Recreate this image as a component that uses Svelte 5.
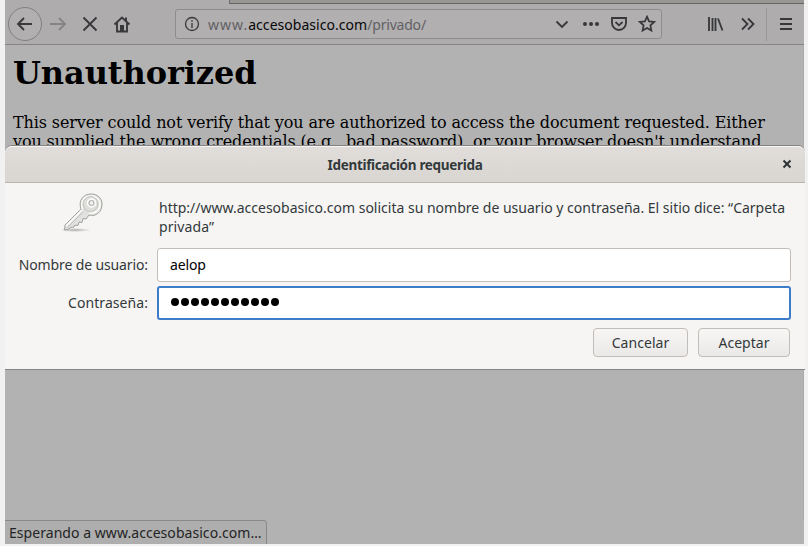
<script>
  let user = $state('aelop');
  const password = '●'.repeat(11);
</script>

<div class="screen">
  <div class="window">
    <div class="tabs"><span></span></div>
    <nav class="toolbar">
      <button class="back" aria-label="Atrás"><svg width="18" height="16" viewBox="0 0 18 16"><path d="M16 8H2M8 2L2 8l6 6" /></svg></button>
      <svg class="forward" width="18" height="16" viewBox="0 0 18 16"><path d="M1 8h15M10 2l6 6-6 6" /></svg>
      <svg class="stop" width="16" height="16" viewBox="0 0 16 16"><path d="M1.500 1.500l13 13M14.500 1.500l-13 13" /></svg>
      <svg class="home" width="18" height="17" viewBox="0 0 18 17"><path d="M1.500 8.500L9 1.500l7.500 7M4 7v8.500h10V7" /><path class="solid" d="M7 9h4v6H7zM12 1.500h2v4l-2-2z" /></svg>
      <div class="address">
        <svg class="info" width="16" height="16" viewBox="0 0 16 16"><circle cx="8" cy="8" r="6.500" /><path d="M8 7v5M8 4v1.700" /></svg>
        <span class="url"><span class="sub">www.</span><b>accesobasico.com</b><span class="path">/privado/</span></span>
        <svg class="chevron" width="14" height="10" viewBox="0 0 14 10"><path d="M1.500 2.500L7 8l5.500-5.500" /></svg>
        <svg class="dots" width="18" height="6" viewBox="0 0 18 6"><g class="solid"><circle cx="3" cy="3" r="2" /><circle cx="9" cy="3" r="2" /><circle cx="15" cy="3" r="2" /></g></svg>
        <svg class="pocket" width="18" height="16" viewBox="0 0 18 16"><path d="M2 2h14v5a7 7 0 0 1-14 0zM5.500 6L9 9.300 12.500 6" /></svg>
        <svg class="star" width="18" height="18" viewBox="0 0 18 18"><path d="M9 1.700l2.100 4.700 5 .6-3.700 3.400 1 5.200L9 13l-4.400 2.600 1-5.200L1.900 7l5-.6z" /></svg>
      </div>
      <svg class="library" width="17" height="16" viewBox="0 0 17 16"><path d="M2 1v14M5.500 2v13M8.500 2v13M11 2.500l4.500 12" /></svg>
      <svg class="more" width="16" height="14" viewBox="0 0 16 14"><path d="M2 1.500L7.500 7 2 12.500M8 1.500L13.500 7 8 12.500" /></svg>
      <i class="separator"></i>
      <svg class="menu" width="14" height="14" viewBox="0 0 14 14"><path d="M1 2h12M1 7h12M1 12h12" /></svg>
    </nav>
    <main>
      <h1>Unauthorized</h1>
      <p>This server could not verify that you are authorized to access the document requested. Either<br />you supplied the wrong credentials (e.g., bad password), or your browser doesn't understand</p>
    </main>
    <div class="status"><span>Esperando a www.accesobasico.com…</span></div>
  </div>

  <section class="dialog" role="dialog" aria-label="Identificación requerida">
    <header>
      <h2>Identificación requerida</h2>
      <svg class="close" width="10" height="10" viewBox="0 0 10 10"><path d="M1.500 1.500l7 7M8.500 1.500l-7 7" /></svg>
    </header>
    <div class="message">
      <svg class="key" width="42" height="42" viewBox="0 0 42 42">
        <defs>
          <linearGradient id="metal" x1="0" y1="0" x2="1" y2="1"><stop offset="0" stop-color="#f7f7f5" /><stop offset=".5" stop-color="#dfe0dd" /><stop offset="1" stop-color="#f2f2f0" /></linearGradient>
          <radialGradient id="shade"><stop stop-color="#777" stop-opacity=".6" /><stop offset="1" stop-color="#888" stop-opacity="0" /></radialGradient>
        </defs>
        <ellipse cx="13" cy="38" rx="16" ry="2" fill="url(#shade)" stroke="none" />
        <path d="M19 17C16 9 21 2 29 2c6 0 11 4 11 10 0 8-6 13-13 11l-3 4-3-.5-1 4-3-.5-1 3.500-3-.5-1 2-3 .500-3 2-3.500.5.500-5z" fill="url(#metal)" stroke="#a0a29e" />
        <path d="M20.500 17C18 10 22 4 29 4c5 0 9 3.500 9 8 0 6-5 10-11 9M20 18L4 34" stroke="#fdfdfb" stroke-width="1.400" />
        <circle cx="28.500" cy="12" r="7.500" stroke="#c1c3bf" stroke-width="1" fill="#dededb" />
        <circle cx="29.500" cy="11" r="4" stroke="#fff" stroke-width="1.500" fill="#d2d3d0" />
        <circle cx="29.500" cy="11" r="2.400" stroke="#aaaca8" stroke-width=".9" fill="#f2f1ef" />
        <path d="M21 20L5 36" stroke="#bfc1bd" stroke-width="1" />
      </svg>
      <p><span class="line1">http://www.accesobasico.com solicita su nombre de usuario y contraseña. El sitio dice: “Carpeta</span><br /><span class="line2">privada”</span></p>
    </div>
    <div class="field"><label for="user">Nombre de usuario:</label><input id="user" bind:value={user} /></div>
    <div class="field"><label class="wide" for="pass">Contraseña:</label><div id="pass" class="password">{#each password as dot}<i></i>{/each}</div></div>
    <footer><button class="cancel">Cancelar</button><button class="accept">Aceptar</button></footer>
  </section>
</div>

<style>
  :global(body) { margin: 0; overflow: hidden; }
  * { box-sizing: border-box; }
  .screen { position: relative; width: 808px; height: 546px; padding: 0 4px 2px 5px; background: #f1f1f1; font-family: "Noto Sans", sans-serif; font-size: 14px; letter-spacing: -.12px; color: #33393b; overflow: hidden; }
  .window { width: 799px; height: 544px; background: #b2b2b2; display: flex; flex-direction: column; }
  svg { display: block; flex: none; fill: none; stroke: #38383b; stroke-width: 1.850; }
  .solid { fill: #38383b; stroke: none; }
  .tabs { height: 4px; flex: none; background: #aeacad; }
  .tabs span { display: block; margin-left: 224px; height: 4px; background: #999793; border-left: 1px solid #706e6b; border-bottom: 1px solid #666461; }
  .toolbar { height: 41px; flex: none; display: flex; align-items: center; background: #aeacad; border-bottom: 1px solid #868485; padding-left: 3px; }
  .back { width: 34px; height: 34px; padding: 0; border: 1px solid #828082; border-radius: 50%; background: #b1afb0; display: flex; align-items: center; justify-content: center; }
  .forward { margin-left: 7px; stroke: #858385; }
  .stop { margin-left: 15px; }
  .home { margin-left: 15px; }
  .address { width: 487px; height: 30px; margin-left: 44px; border: 1px solid #8e8c8d; border-radius: 3px; background: #b1afb0; display: flex; align-items: center; padding-left: 8px; }
  .info { stroke-width: 1.300; }
  .url { width: 220px; margin-left: 8px; white-space: nowrap; color: #626163; letter-spacing: .04px; }
  .url .sub { letter-spacing: 1px; }
  .url .path { letter-spacing: -.2px; }
  .url b { font-weight: 400; color: #080809; }
  .chevron { margin-left: 127px; }
  .dots { margin-left: 13px; }
  .pocket { margin-left: 10px; }
  .star { margin-left: 10px; stroke-width: 1.700; }
  .library { margin-left: 45px; }
  .more { margin-left: 16px; }
  .separator { width: 1px; height: 33px; margin-left: 10px; background: #9a989a; }
  .menu { margin-left: 12px; }
  main { flex: 1; padding: 9px 8px 8px; font-family: "DejaVu Serif", serif; font-size: 16px; line-height: 19px; letter-spacing: -.118px; color: #000; white-space: nowrap; border-right: 1px solid #aaa; }
  h1 { margin: 0 0 20px; font-size: 32px; line-height: 39px; letter-spacing: -.08px; }
  main p { margin: 0; }
  .status { width: 262px; height: 24px; border: 1px solid #898989; border-left: 0; border-bottom: 0; border-radius: 0 4px 0 0; background: #aeaeae; padding: 1px 0 0 4px; white-space: nowrap; line-height: 22px; letter-spacing: .05px; color: #242424; }
  .dialog { position: absolute; left: 5px; top: 146px; width: 800px; height: 224px; border-bottom: 1px solid #858585; border-radius: 7px 7px 0 0; background: #f6f5f3; box-shadow: 0 -1px #858381; }
  header { height: 37px; display: flex; align-items: center; justify-content: center; border-bottom: 1px solid #b9b5b0; border-top: 1px solid #f7f5f3; border-radius: 7px 7px 0 0; background: linear-gradient(#e0ddda, #d9d5d1); position: relative; }
  h2 { margin: 0; font-size: 13.500px; line-height: 20px; letter-spacing: -.31px; }
  .close { position: absolute; right: 13px; top: 12px; stroke: #2e3436; stroke-width: 2; }
  .message { display: flex; height: 65px; padding: 9px 0 0 57px; }
  .message p { margin: 6px 0 0 55px; line-height: 19px; white-space: nowrap; }
  .line1 { letter-spacing: -.002px; }
  .line2 { letter-spacing: .1px; }
  .key { stroke-width: 1; }
  .field { height: 34px; margin-bottom: 4px; display: flex; align-items: center; }
  .field label { width: 143px; padding-bottom: 2px; text-align: right; white-space: nowrap; }
  .field .wide { letter-spacing: .06px; }
  input, .password { width: 634px; height: 34px; margin-left: 9px; border: 1px solid #c3beb9; border-radius: 3px; padding: 0 12px 2px; background: #fff; font: inherit; letter-spacing: inherit; color: #000; outline: 0; }
  .password { border: 2px solid #3d7cc9; display: flex; align-items: center; gap: 2px; }
  .password i { width: 8px; height: 8px; border-radius: 50%; background: #000; }
  footer { display: flex; justify-content: flex-end; gap: 10px; padding: 4px 15px 0 0; }
  footer button { height: 29px; padding: 0; border: 1px solid #c2bdb9; border-radius: 4px; background: linear-gradient(#f7f6f5, #ebe9e7); font: inherit; letter-spacing: .05px; color: #33393b; }
  .cancel { width: 95px; }
  .accept { width: 92px; }
</style>
